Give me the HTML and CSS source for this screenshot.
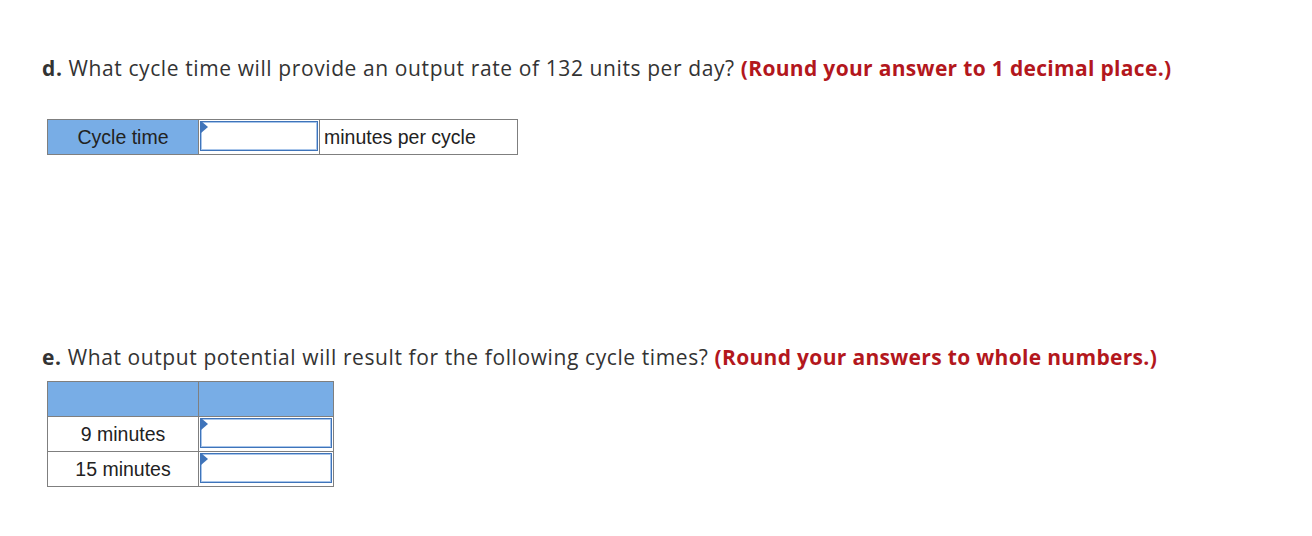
FILE: index.html
```html
<!DOCTYPE html>
<html>
<head>
<meta charset="utf-8">
<link rel="stylesheet" href="styles.css">
</head>
<body>
<div class="page">
  <p class="question"><b>d.</b> What cycle time will provide an output rate of 132 units per day? <span class="hint">(Round your answer to 1 decimal place.)</span></p>
  <table class="grid grid-d">
    <tr>
      <td class="label">Cycle time</td>
      <td class="input-cell"><div class="answer"><span class="flag"></span></div></td>
      <td class="unit">minutes per cycle</td>
    </tr>
  </table>

  <p class="question q-e"><b>e.</b> What output potential will result for the following cycle times? <span class="hint">(Round your answers to whole numbers.)</span></p>
  <table class="grid grid-e">
    <tr class="head">
      <td class="c1"></td>
      <td class="c2"></td>
    </tr>
    <tr>
      <td class="c1 row-label">9 minutes</td>
      <td class="input-cell"><div class="answer"><span class="flag"></span></div></td>
    </tr>
    <tr>
      <td class="c1 row-label">15 minutes</td>
      <td class="input-cell"><div class="answer"><span class="flag"></span></div></td>
    </tr>
  </table>
</div>
</body>
</html>
```
FILE: styles.css
```css
html, body {
  margin: 0;
  padding: 0;
  background: #ffffff;
}
.page {
  padding: 54px 0 0 42px;
}
.question {
  margin: 0;
  font-family: "Open Sans", sans-serif;
  font-size: 21px;
  line-height: 28px;
  letter-spacing: 0.6px;
  color: #333333;
  white-space: nowrap;
}
.question b {
  font-weight: 700;
}
.hint {
  color: #b3171d;
  font-weight: 700;
  letter-spacing: 0.32px;
}
.grid {
  border-collapse: collapse;
  font-family: "Liberation Sans", Arial, sans-serif;
  font-size: 19.5px;
  color: #222222;
  margin-left: 5px;
}
.grid td {
  border: 1px solid #7f7f7f;
  padding: 0;
}
.grid-d {
  margin-top: 37px;
}
.grid-d td {
  height: 32px;
}
.label {
  width: 150px;
  background: #78ade6;
  text-align: center;
}
.grid-d .input-cell {
  width: 118px;
}
.unit {
  width: 193px;
  padding-left: 4px !important;
  text-align: left;
}
.input-cell {
  padding: 1px !important;
  vertical-align: top;
}
.answer {
  position: relative;
  box-sizing: border-box;
  height: 30px;
  border: 1px solid #3f74ba;
  box-shadow: inset 0 0 0 1px #a8c5ea;
  background: #ffffff;
}
.flag {
  position: absolute;
  left: 0;
  top: 0;
  width: 0;
  height: 0;
  border-top: 6px solid transparent;
  border-bottom: 6px solid transparent;
  border-left: 7px solid #3f74ba;
  margin-top: -1px;
}
.q-e {
  margin-top: 188px;
}
.grid-e {
  margin-top: 10px;
}
.grid-e td {
  height: 32px;
}
.grid-e .head td {
  height: 34px;
  background: #78ade6;
}
.grid-e .c1 {
  width: 150px;
  text-align: center;
}
.grid-e .c2 {
  width: 134px;
}
```
